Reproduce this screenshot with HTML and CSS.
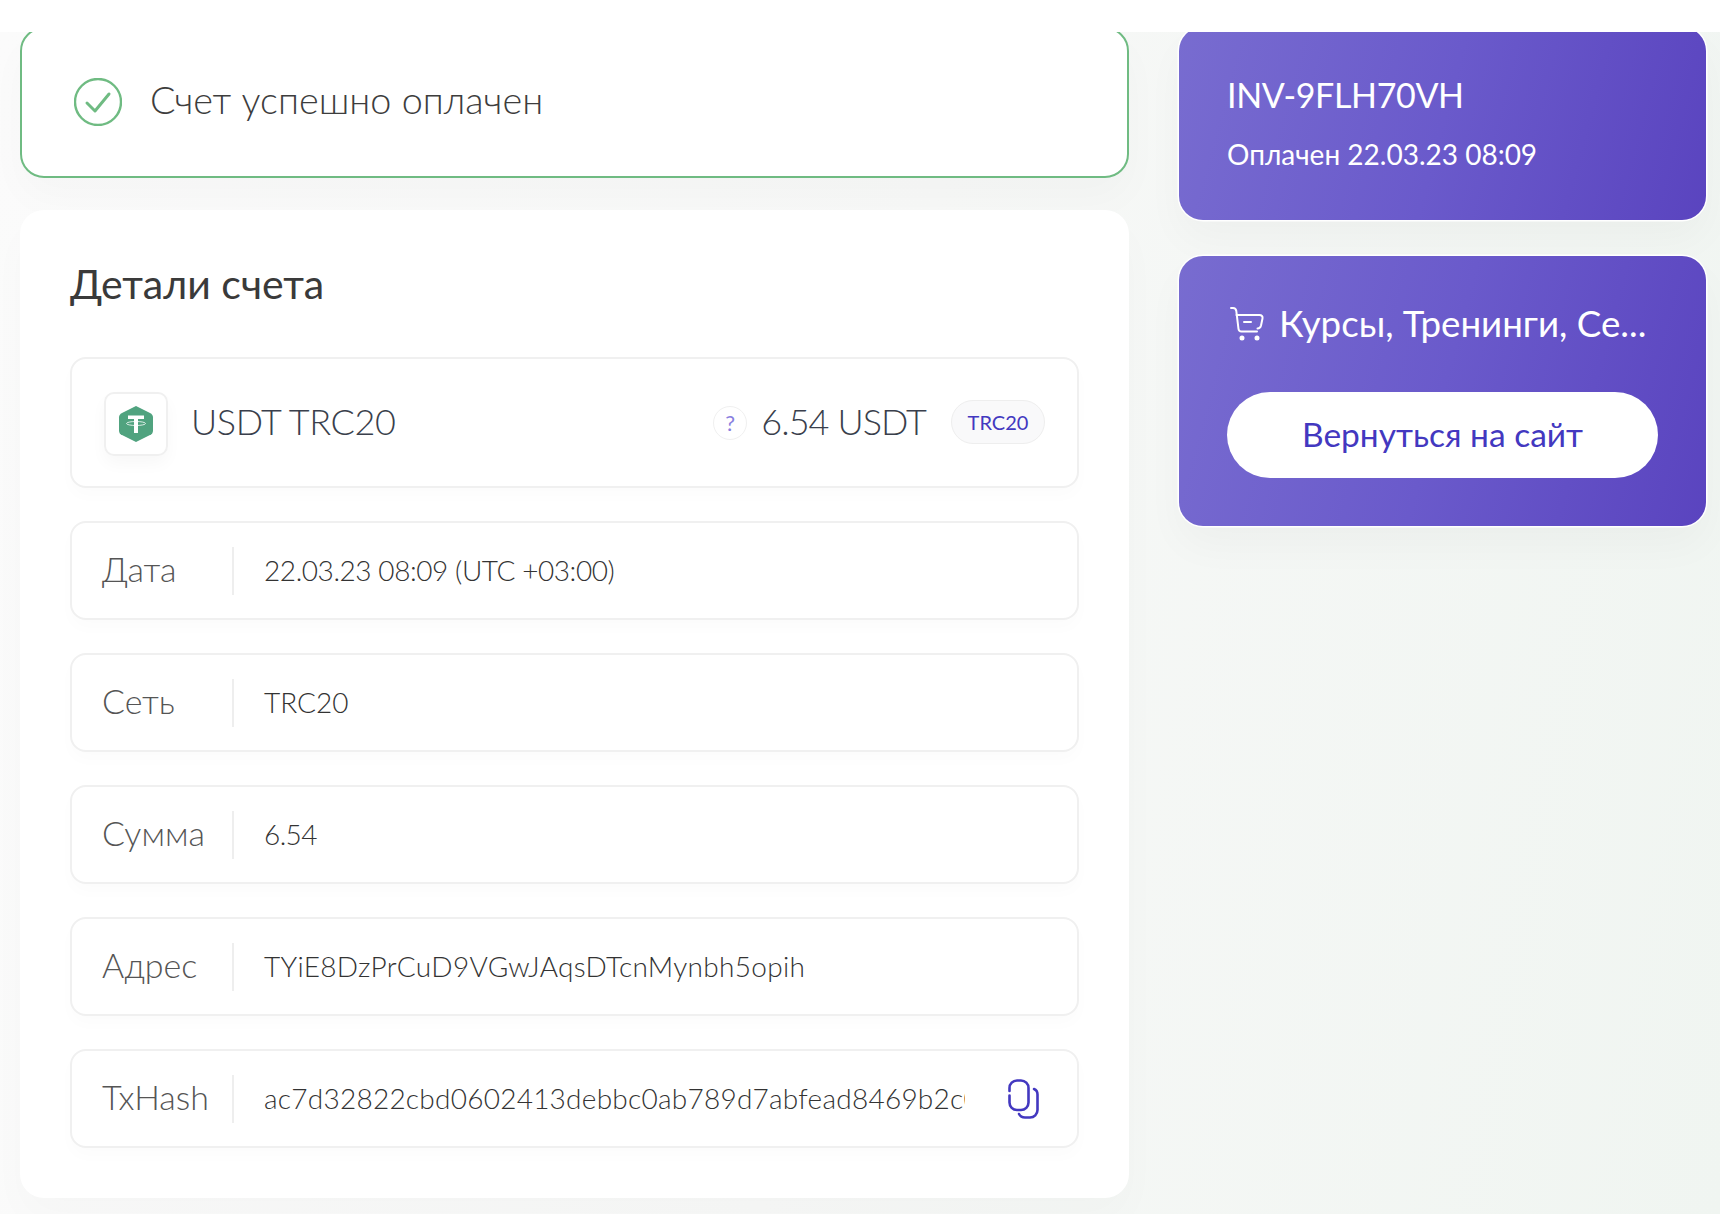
FILE: index.html
```html
<!DOCTYPE html>
<html lang="ru">
<head>
<meta charset="utf-8">
<title>Счет</title>
<link rel="stylesheet" href="styles.css">
</head>
<body>
<header class="topbar"></header>
<main class="page">
  <section class="col-main">
    <div class="success">
      <svg class="success-icon" viewBox="0 0 48 48" fill="none"><circle cx="24" cy="24" r="23" stroke="#6fbb82" stroke-width="2.4"/><path d="M13 25l8 8 14-17" stroke="#6fbb82" stroke-width="3" stroke-linecap="round" stroke-linejoin="round"/></svg>
      <span class="success-text">Счет успешно оплачен</span>
    </div>
    <div class="details">
      <h2 class="details-title">Детали счета</h2>
      <div class="rows">
        <div class="row row-coin">
          <span class="coin-box">
            <svg class="coin" viewBox="0 0 36 38"><path d="M18 1l14 7c2 1 3 2.500 3 4.500v13c0 2-1 3.500-3 4.500l-14 7-14-7c-2-1-3-2.500-3-4.500v-13c0-2 1-3.500 3-4.500z" fill="#50a37f"/><path d="M10 10.500h16v3.500h-6v14h-4v-14h-6z" fill="#fff"/><ellipse cx="18" cy="18.500" rx="9.500" ry="2" fill="none" stroke="#fff" stroke-width=".8"/></svg>
          </span>
          <span class="coin-name">USDT TRC20</span>
          <span class="coin-right">
            <span class="help">?</span>
            <span class="coin-amount">6.54 USDT</span>
            <span class="badge">TRC20</span>
          </span>
        </div>
        <div class="row"><span class="label">Дата</span><span class="value value-date">22.03.23 08:09 (UTC +03:00)</span></div>
        <div class="row"><span class="label">Сеть</span><span class="value">TRC20</span></div>
        <div class="row"><span class="label">Сумма</span><span class="value value-sum">6.54</span></div>
        <div class="row"><span class="label">Адрес</span><span class="value value-wide">TYiE8DzPrCuD9VGwJAqsDTcnMynbh5opih</span></div>
        <div class="row"><span class="label">TxHash</span><span class="value value-clip">ac7d32822cbd0602413debbc0ab789d7abfead8469b2c0f3</span>
          <svg class="copy" viewBox="0 0 31 40" fill="none" stroke="#4338c0" stroke-width="2.600" stroke-linecap="round"><path d="M1.500 12v-3a7.500 7.500 0 0 1 7.500-7.500h4a7.500 7.500 0 0 1 7.500 7.500v14.500a7.500 7.500 0 0 1-7.500 7.500h-4a7.500 7.500 0 0 1-7.500-7.500v-7"/><path d="M26 10c2.500 1 3.500 3 3.500 5.500v15.500a7.500 7.500 0 0 1-7.500 7.500h-5c-3 0-5-1.500-6-3.500"/></svg>
        </div>
      </div>
    </div>
  </section>
  <aside class="col-side">
    <div class="side-card side-invoice">
      <div class="inv-id">INV-9FLH70VH</div>
      <div class="inv-paid">Оплачен 22.03.23 08:09</div>
    </div>
    <div class="side-card side-shop">
      <div class="shop">
        <svg class="cart" viewBox="0 0 34 34" fill="none" stroke="#fff" stroke-width="2" stroke-linecap="round" stroke-linejoin="round"><path d="M1 1h2c2 0 3 1 3.300 3l2.200 18c.2 1.500 1.200 2.500 3 2.500h15.500"/><path d="M6.500 8h23c2 0 3.500 1.500 3 3.500l-1.500 7c-.5 2-1.500 3-3.500 3"/><path d="M14 15h7"/><circle cx="12" cy="31" r="1.500" fill="#fff"/><circle cx="27" cy="31" r="1.500" fill="#fff"/></svg>
        <span class="shop-name">Курсы, Тренинги, Се...</span>
      </div>
      <a class="back" href="#">Вернуться на сайт</a>
    </div>
  </aside>
</main>
</body>
</html>
```
FILE: styles.css
```css
* { box-sizing: border-box; }
html, body { margin: 0; height: 100%; }
body {
  background: #fff;
  font-family: "Lato", "Noto Sans", sans-serif;
  overflow: hidden;
}
.topbar { height: 32px; background: #fff; }
.page {
  height: 1182px;
  overflow: hidden;
  display: grid;
  grid-template-columns: 1109px 527px;
  column-gap: 50px;
  align-items: start;
  padding: 0 14px 0 20px;
  background: linear-gradient(100deg, #fbfbfb 0%, #f7f8f7 50%, #f0f5f1 100%);
}
.col-main, .col-side { margin-top: -5px; }
.col-main { display: flex; flex-direction: column; gap: 32px; }
.col-side { display: flex; flex-direction: column; gap: 36px; }

.success {
  height: 151px;
  display: flex;
  align-items: center;
  gap: 28px;
  padding-left: 52px;
  background: #fff;
  border: 2px solid #6fbb82;
  border-radius: 24px;
  box-shadow: 0 20px 40px rgba(0,0,0,.025);
}
.success-icon { width: 48px; height: 48px; flex: none; margin-bottom: 1px; }
.success-text { font-size: 37.8px; font-weight: 300; color: #3d3d3d; padding-bottom: 6px; }

.details {
  height: 988px;
  padding: 49px 50px 50px;
  background: #fff;
  border-radius: 24px;
  box-shadow: 0 20px 40px rgba(0,0,0,.02);
}
.details-title {
  margin: 0 0 48px;
  font-size: 41px;
  line-height: 50px;
  font-weight: 400;
  color: #3a3a3a;
}
.rows { display: flex; flex-direction: column; gap: 33px; }
.row {
  height: 99px;
  display: flex;
  align-items: center;
  padding: 0 32px 0 30px;
  background: #fff;
  border: 2px solid #f0f0f0;
  border-radius: 16px;
  box-shadow: 0 8px 16px rgba(0,0,0,.015);
}
.row-coin { height: 131px; padding: 0 32px; }
.coin-box {
  width: 64px;
  height: 64px;
  flex: none;
  margin-top: 2px;
  display: flex;
  align-items: center;
  justify-content: center;
  border: 2px solid #f0f0f0;
  border-radius: 10px;
  box-shadow: 0 8px 16px rgba(0,0,0,.03);
}
.coin { width: 36px; height: 38px; }
.coin-name {
  margin-left: 23px;
  padding-bottom: 4px;
  font-size: 36px;
  font-weight: 300;
  letter-spacing: -.4px;
  color: #3a3f4c;
}
.coin-right { margin-left: auto; display: flex; align-items: center; }
.help {
  width: 34px;
  height: 34px;
  display: flex;
  align-items: center;
  justify-content: center;
  border: 1px solid #f0f0f0;
  border-radius: 50%;
  font-size: 22px;
  color: #8a7fe0;
}
.coin-amount {
  margin-left: 14px;
  padding-bottom: 4px;
  font-size: 36px;
  font-weight: 300;
  letter-spacing: -.9px;
  color: #3a3f4c;
}
.badge {
  margin-left: 25px;
  margin-bottom: 2px;
  width: 94px;
  height: 44px;
  display: flex;
  align-items: center;
  justify-content: center;
  background: #f9f9fa;
  border: 1px solid #eeeeee;
  border-radius: 22px;
  font-size: 20px;
  color: #4338c0;
}
.label {
  width: 132px;
  height: 48px;
  flex: none;
  display: flex;
  align-items: center;
  padding-bottom: 4px;
  border-right: 2px solid #eeeeee;
  font-size: 34px;
  font-weight: 300;
  color: #555;
}
.value {
  margin-left: 30px;
  padding-bottom: 2px;
  font-size: 28px;
  font-weight: 300;
  color: #333;
  white-space: nowrap;
}
.value-date { letter-spacing: -.42px; }
.value-sum { letter-spacing: -.6px; }
.value-wide { letter-spacing: .3px; }
.value-clip { width: 701px; overflow: hidden; flex: none; letter-spacing: .25px; }
.copy { width: 31px; height: 40px; margin-left: auto; margin-right: 6px; flex: none; }

.side-card {
  padding: 48px;
  border-radius: 24px;
  background: linear-gradient(105deg, #786cd0 0%, #6a5acb 50%, #5a44bf 100%);
  color: #fff;
  box-shadow: 0 0 0 1.5px #fff, 0 20px 40px rgba(0,0,0,.03);
}
.side-invoice { height: 193px; padding-top: 46px; }
.inv-id { font-size: 34px; line-height: 44px; font-weight: 400; letter-spacing: -.35px; }
.inv-paid { margin-top: 19px; font-size: 28px; line-height: 36px; font-weight: 400; }
.side-shop { height: 270px; padding: 0 48px; }
.shop { height: 136px; display: flex; align-items: center; gap: 15px; }
.cart { width: 34px; height: 34px; flex: none; margin-left: 3px; }
.shop-name { font-size: 36.7px; font-weight: 400; white-space: nowrap; padding-bottom: 2px; }
.back {
  display: flex;
  align-items: center;
  justify-content: center;
  height: 86px;
  width: 431px;
  background: #fff;
  border-radius: 43px;
  font-size: 33.5px;
  padding-bottom: 2px;
  color: #4338c0;
  text-decoration: none;
}
```
